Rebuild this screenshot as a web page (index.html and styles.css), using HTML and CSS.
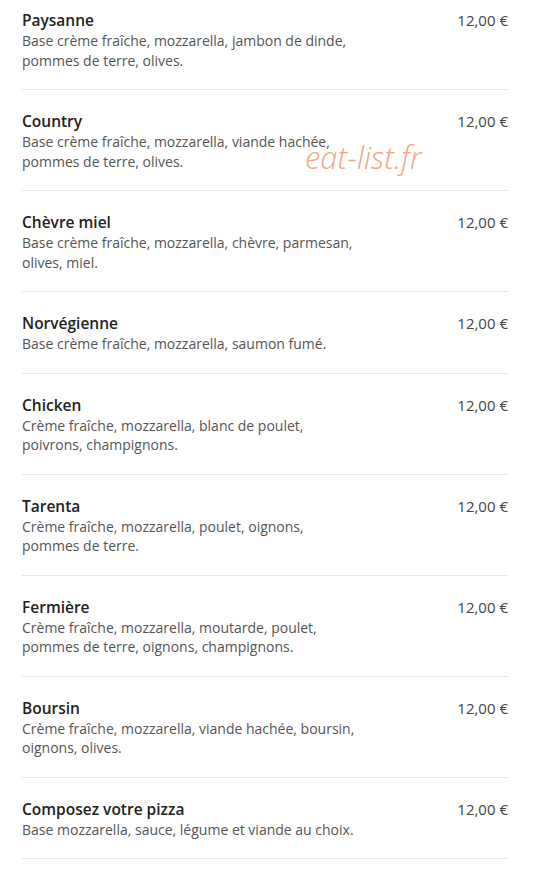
FILE: index.html
```html
<!DOCTYPE html>
<html lang="fr">
<head>
    <meta charset="UTF-8">
    <meta name="viewport" content="width=device-width, initial-scale=1.0">
    <title>Pizzas - Carte</title>
    <link rel="stylesheet" href="styles.css">
</head>
<body>
    <div class="menu">
        <div class="item">
            <div class="info">
                <h3>Paysanne</h3>
                <p>Base crème fraîche, mozzarella, jambon de dinde, pommes de terre, olives.</p>
            </div>
            <span class="price">12,00 €</span>
        </div>
        <div class="item">
            <div class="info">
                <h3>Country</h3>
                <p>Base crème fraîche, mozzarella, viande hachée, pommes de terre, olives.</p>
            </div>
            <span class="price">12,00 €</span>
            <span class="watermark">eat-list.fr</span>
        </div>
        <div class="item">
            <div class="info">
                <h3>Chèvre miel</h3>
                <p>Base crème fraîche, mozzarella, chèvre, parmesan, olives, miel.</p>
            </div>
            <span class="price">12,00 €</span>
        </div>
        <div class="item">
            <div class="info">
                <h3>Norvégienne</h3>
                <p>Base crème fraîche, mozzarella, saumon fumé.</p>
            </div>
            <span class="price">12,00 €</span>
        </div>
        <div class="item">
            <div class="info">
                <h3>Chicken</h3>
                <p>Crème fraîche, mozzarella, blanc de poulet, poivrons, champignons.</p>
            </div>
            <span class="price">12,00 €</span>
        </div>
        <div class="item">
            <div class="info">
                <h3>Tarenta</h3>
                <p>Crème fraîche, mozzarella, poulet, oignons, pommes de terre.</p>
            </div>
            <span class="price">12,00 €</span>
        </div>
        <div class="item">
            <div class="info">
                <h3>Fermière</h3>
                <p>Crème fraîche, mozzarella, moutarde, poulet, pommes de terre, oignons, champignons.</p>
            </div>
            <span class="price">12,00 €</span>
        </div>
        <div class="item">
            <div class="info">
                <h3>Boursin</h3>
                <p>Crème fraîche, mozzarella, viande hachée, boursin, oignons, olives.</p>
            </div>
            <span class="price">12,00 €</span>
        </div>
        <div class="item">
            <div class="info">
                <h3>Composez votre pizza</h3>
                <p>Base mozzarella, sauce, légume et viande au choix.</p>
            </div>
            <span class="price">12,00 €</span>
        </div>
    </div>
</body>
</html>
```

FILE: styles.css
```css
body {
    margin: 0;
    background-color: #fff;
    font-family: 'Open Sans', sans-serif;
}

.menu {
    width: 486px;
    margin: 10px 0 0 22px;
}

.item {
    position: relative;
    display: flex;
    justify-content: space-between;
    align-items: flex-start;
    padding: 21px 0 19px;
    border-bottom: 1px solid #e6e6e6;
}

.item:first-child {
    padding-top: 0;
}

.info {
    width: 334px;
}

.info h3 {
    margin: 0;
    font-size: 15.5px;
    font-weight: 600;
    line-height: 21px;
    color: #222;
}

.info p {
    margin: 0;
    font-size: 14px;
    line-height: 19.5px;
    color: #555;
}

.price {
    font-size: 15px;
    line-height: 21px;
    color: #444;
}

.watermark {
    position: absolute;
    left: 283px;
    top: 49px;
    font-size: 31px;
    line-height: 36px;
    font-style: italic;
    font-weight: 300;
    color: #f5a583;
}
```
